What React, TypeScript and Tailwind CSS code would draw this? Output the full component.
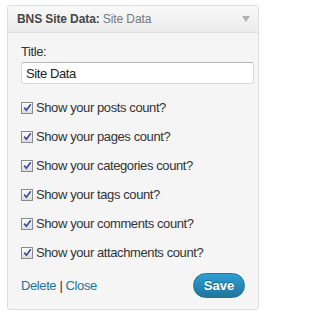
const options = [
  "Show your posts count?",
  "Show your pages count?",
  "Show your categories count?",
  "Show your tags count?",
  "Show your comments count?",
  "Show your attachments count?",
];

function CheckBox() {
  return (
    <span className="flex h-[12px] w-[12px] shrink-0 items-center justify-center border border-[#8a8a8a] bg-gradient-to-b from-[#fdfdfd] to-[#dcdcdc]">
      <svg width="9" height="9" viewBox="0 0 9 9">
        <path d="M1.2 4.6 L3.4 7.2 L7.8 1.2" fill="none" stroke="#3b4c9b" strokeWidth="1.7" />
      </svg>
    </span>
  );
}

export default function App() {
  return (
    <div
      className="h-[316px] w-[266px] bg-white pl-[7px] pt-[5px]"
      style={{ fontFamily: '"Liberation Sans", Arial, sans-serif' }}
    >
      <div className="w-[252px] overflow-hidden rounded-[3px] border border-[#dfdfdf] bg-[#f5f5f5]">
        <div className="flex h-[27px] items-center justify-between border-b border-[#dfdfdf] bg-gradient-to-b from-[#f9f9f9] to-[#ececec] pl-[9px] pr-[8px]">
          <span className="text-[12px] tracking-[-0.1px] text-[#464646]">
            <b>BNS Site Data:</b> <span className="text-[#777]">Site Data</span>
          </span>
          <svg width="8" height="6" viewBox="0 0 8 6">
            <path d="M0 0 L8 0 L4 6 Z" fill="#b0b0b0" />
          </svg>
        </div>

        <div className="px-[13px] pb-[11px] pt-[11px] text-[13px] tracking-[-0.4px] text-[#333]">
          <div className="leading-[15px]">Title:</div>
          <input
            readOnly
            value="Site Data"
            className="mt-[3px] h-[22px] w-[233px] rounded-[3px] border border-[#d8d8d8] border-t-[#b5b5b5] bg-white px-[4px] text-[13px] tracking-[-0.4px] text-[#222] outline-none"
          />

          <div className="mt-[16px] flex flex-col gap-[14px]">
            {options.map((o) => (
              <label key={o} className="flex h-[15px] items-center gap-[3px] leading-[15px]">
                <CheckBox />
                {o}
              </label>
            ))}
          </div>

          <div className="mt-[13px] flex items-center justify-between">
            <span className="text-[#21759b]">
              Delete <span className="text-[#333]">|</span> Close
            </span>
            <button className="h-[25px] w-[52px] rounded-full border border-[#21759b] bg-gradient-to-b from-[#2e9fd2] to-[#21759b] text-[13px] font-bold tracking-normal text-white [text-shadow:0_-1px_0_rgba(0,0,0,0.3)]">
              Save
            </button>
          </div>
        </div>
      </div>
    </div>
  );
}
